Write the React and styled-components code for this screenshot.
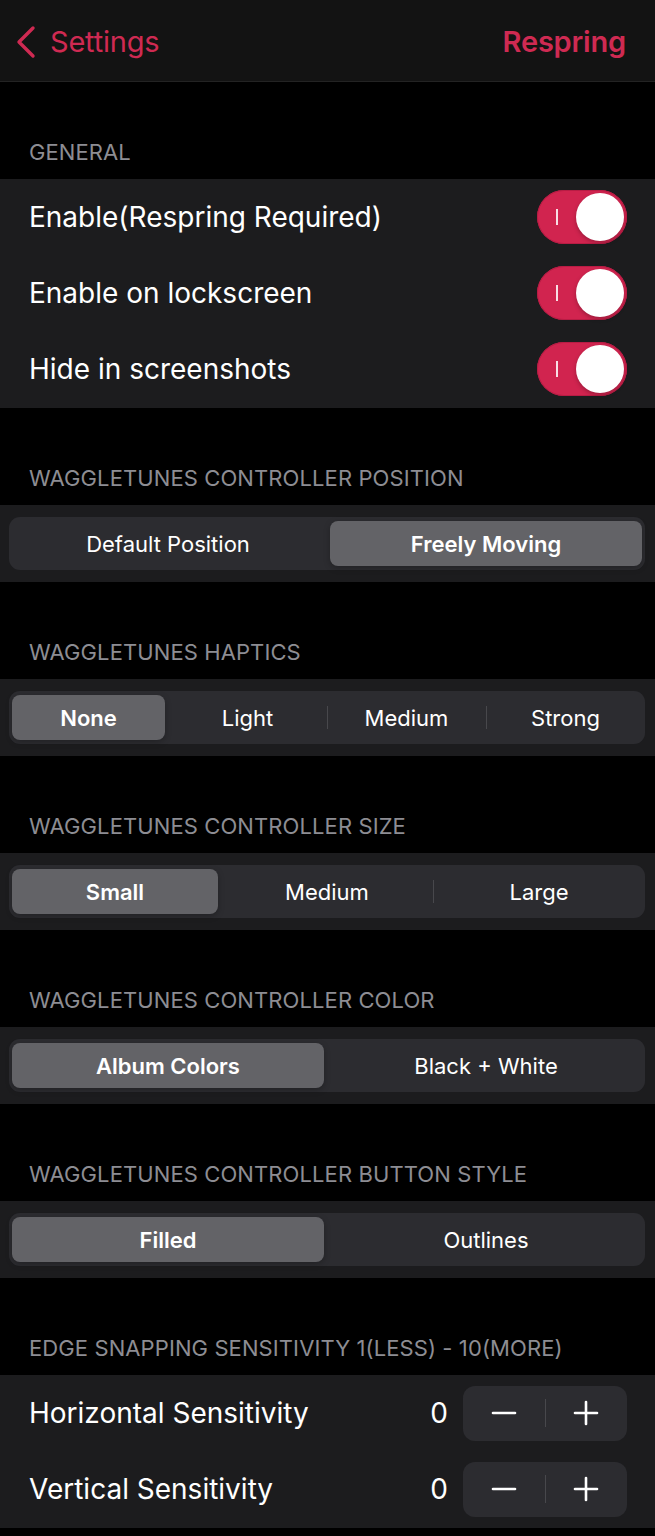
import React from "react";
import styled, { createGlobalStyle } from "styled-components";

const accent = "#cf2a52";

const GlobalStyle = createGlobalStyle`
  body {
    margin: 0;
    background: #000;
    font-family: "Inter", "Noto Sans", sans-serif;
    -webkit-font-smoothing: antialiased;
  }
`;

const Page = styled.div`
  width: 655px;
  min-height: 1536px;
  background: #000;
  color: #fff;
`;

const NavBar = styled.div`
  height: 82px;
  background: #131313;
  border-bottom: 1px solid #232323;
  display: flex;
  align-items: center;
  justify-content: space-between;
  padding: 2px 29px 0 15px;
  box-sizing: border-box;
`;

const BackButton = styled.div`
  display: flex;
  align-items: center;
  gap: 14px;
  color: ${accent};
  font-size: 29px;
  letter-spacing: -0.2px;
`;

const NavAction = styled.div`
  color: ${accent};
  font-size: 29px;
  font-weight: 600;
  letter-spacing: -0.2px;
`;

const SectionHeader = styled.div`
  height: 97px;
  box-sizing: border-box;
  display: flex;
  align-items: flex-end;
  padding: 0 29px 14px;
  font-size: 22px;
  line-height: 26px;
  color: #8d8d93;
  text-transform: uppercase;
  letter-spacing: 0.1px;
`;

const Card = styled.div`
  background: #1c1c1e;
  padding: ${(p) => (p.$inset ? "12px 10px 12px 9px" : "0 0 1px")};
`;

const Row = styled.div`
  height: 76px;
  display: flex;
  align-items: center;
  justify-content: space-between;
  padding: 0 28px 0 29px;
  font-size: 28px;
`;

const Toggle = styled.div`
  position: relative;
  width: 90px;
  height: 54px;
  border-radius: 27px;
  background: #d1244f;
  box-shadow: inset 0 0 0 1px #b81c44;
`;

const ToggleMark = styled.span`
  position: absolute;
  left: 19px;
  top: 19px;
  width: 2px;
  height: 16px;
  background: rgba(255, 255, 255, 0.85);
`;

const Knob = styled.span`
  position: absolute;
  right: 3px;
  top: 3px;
  width: 48px;
  height: 48px;
  border-radius: 50%;
  background: #fff;
  box-shadow: 0 2px 4px rgba(0, 0, 0, 0.25);
`;

const Segmented = styled.div`
  height: 53px;
  display: grid;
  grid-template-columns: repeat(${(p) => p.$count}, 1fr);
  background: #2c2c30;
  border-radius: 11px;
  padding: 4px 0;
  box-sizing: border-box;
`;

const Segment = styled.div`
  position: relative;
  display: flex;
  align-items: center;
  justify-content: center;
  margin: 0 3px;
  border-radius: 8px;
  font-size: 22px;
  font-weight: ${(p) => (p.$active ? 600 : 400)};
  background: ${(p) => (p.$active ? "#636367" : "transparent")};
  box-shadow: ${(p) => (p.$active ? "0 2px 6px rgba(0,0,0,0.25)" : "none")};
  color: #fff;

  &::before {
    content: "";
    display: ${(p) => (p.$divider ? "block" : "none")};
    position: absolute;
    left: -3px;
    top: 11px;
    bottom: 11px;
    width: 1px;
    background: #48484c;
  }
`;

const Value = styled.span`
  font-size: 28px;
  margin-left: auto;
  margin-right: 15px;
`;

const Stepper = styled.div`
  width: 164px;
  height: 55px;
  border-radius: 12px;
  background: #2c2c30;
  display: grid;
  grid-template-columns: 1fr 1px 1fr;
  align-items: center;
`;

const StepButton = styled.div`
  display: flex;
  align-items: center;
  justify-content: center;
  height: 100%;
`;

const StepDivider = styled.div`
  height: 28px;
  background: #48484c;
`;

function Chevron() {
  return (
    <svg width="21" height="34" viewBox="0 0 21 34">
      <polyline
        points="18,3 4,17 18,31"
        fill="none"
        stroke={accent}
        strokeWidth="3.4"
        strokeLinecap="round"
        strokeLinejoin="round"
      />
    </svg>
  );
}

function Switch() {
  return (
    <Toggle>
      <ToggleMark />
      <Knob />
    </Toggle>
  );
}

function SegmentedControl({ options, selected }) {
  return (
    <Segmented $count={options.length}>
      {options.map((opt, i) => (
        <Segment
          key={opt}
          $active={i === selected}
          $divider={i > 0 && i !== selected && i - 1 !== selected}
        >
          {opt}
        </Segment>
      ))}
    </Segmented>
  );
}

function StepperControl() {
  return (
    <Stepper>
      <StepButton>
        <svg width="26" height="26" viewBox="0 0 26 26">
          <line x1="2" y1="13" x2="24" y2="13" stroke="#fff" strokeWidth="2.6" strokeLinecap="round" />
        </svg>
      </StepButton>
      <StepDivider />
      <StepButton>
        <svg width="26" height="26" viewBox="0 0 26 26">
          <line x1="2" y1="13" x2="24" y2="13" stroke="#fff" strokeWidth="2.6" strokeLinecap="round" />
          <line x1="13" y1="2" x2="13" y2="24" stroke="#fff" strokeWidth="2.6" strokeLinecap="round" />
        </svg>
      </StepButton>
    </Stepper>
  );
}

const segments = [
  { title: "WaggleTunes Controller Position", options: ["Default Position", "Freely Moving"], selected: 1 },
  { title: "WaggleTunes Haptics", options: ["None", "Light", "Medium", "Strong"], selected: 0 },
  { title: "WaggleTunes Controller Size", options: ["Small", "Medium", "Large"], selected: 0 },
  { title: "WaggleTunes Controller Color", options: ["Album Colors", "Black + White"], selected: 0 },
  { title: "WaggleTunes Controller Button Style", options: ["Filled", "Outlines"], selected: 0 },
];

export default function App() {
  return (
    <Page>
      <GlobalStyle />
      <NavBar>
        <BackButton>
          <Chevron />
          Settings
        </BackButton>
        <NavAction>Respring</NavAction>
      </NavBar>

      <SectionHeader>General</SectionHeader>
      <Card>
        {["Enable(Respring Required)", "Enable on lockscreen", "Hide in screenshots"].map((label) => (
          <Row key={label}>
            {label}
            <Switch />
          </Row>
        ))}
      </Card>

      {segments.map((s) => (
        <React.Fragment key={s.title}>
          <SectionHeader>{s.title}</SectionHeader>
          <Card $inset>
            <SegmentedControl options={s.options} selected={s.selected} />
          </Card>
        </React.Fragment>
      ))}

      <SectionHeader>Edge Snapping Sensitivity 1(less) - 10(more)</SectionHeader>
      <Card>
        {["Horizontal Sensitivity", "Vertical Sensitivity"].map((label) => (
          <Row key={label}>
            {label}
            <Value>0</Value>
            <StepperControl />
          </Row>
        ))}
      </Card>
    </Page>
  );
}
